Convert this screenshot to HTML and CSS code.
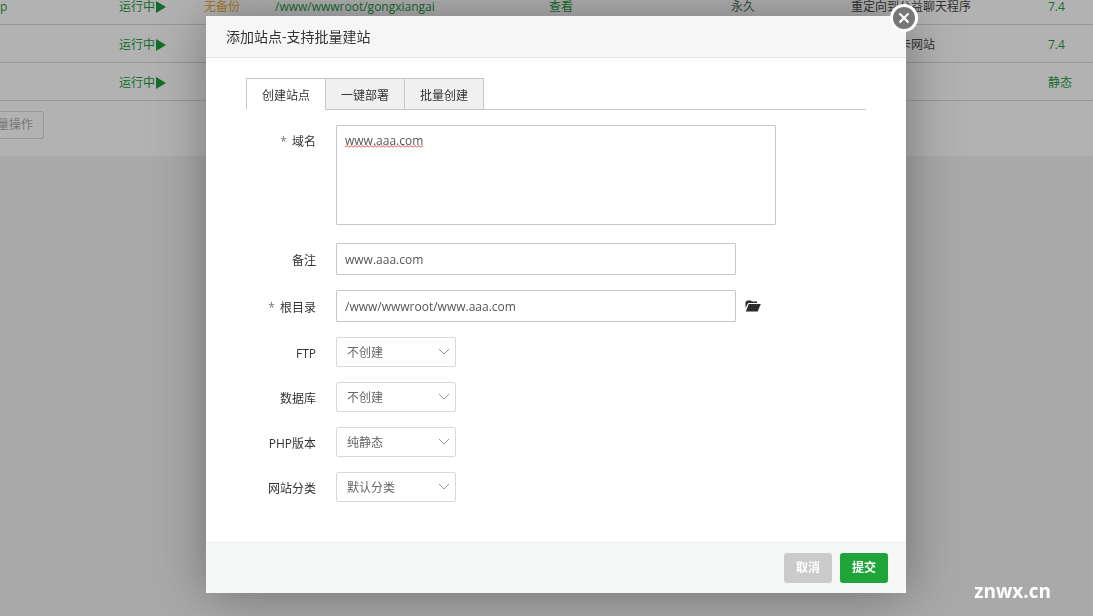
FILE: index.html
```html
<!DOCTYPE html>
<html lang="zh-CN">
<head>
<meta charset="utf-8">
<title>添加站点</title>
<link rel="stylesheet" href="styles.css">
</head>
<body>
<main class="panel">
  <table class="sites">
    <colgroup><col class="c-name"><col class="c-status"><col class="c-backup"><col class="c-path"><col class="c-view"><col class="c-expire"><col class="c-note"><col class="c-php"></colgroup>
    <tbody>
      <tr><td class="green">p</td><td class="green"><span class="status">运行中<i class="play"></i></span></td><td class="orange">无备份</td><td class="green">/www/wwwroot/gongxiangai</td><td class="green">查看</td><td class="muted">永久</td><td>重定向到公益聊天程序</td><td class="green">7.4</td></tr>
      <tr><td></td><td class="green"><span class="status">运行中<i class="play"></i></span></td><td></td><td></td><td></td><td></td><td><span class="indent">卡网站</span></td><td class="green">7.4</td></tr>
      <tr><td></td><td class="green"><span class="status">运行中<i class="play"></i></span></td><td></td><td></td><td></td><td></td><td></td><td class="green">静态</td></tr>
    </tbody>
  </table>
  <button class="batch" type="button">量操作</button>
</main>

<div class="overlay">
  <section class="dialog" role="dialog" aria-labelledby="dialog-title">
    <header class="dialog-head"><h1 id="dialog-title">添加站点-支持批量建站</h1></header>
    <button class="close" type="button" aria-label="关闭">
      <svg viewBox="0 0 30 30" width="30" height="30"><circle cx="15" cy="15" r="12.5" fill="#777" stroke="#fff" stroke-width="3"/><path d="M10.5 10.5l9 9M19.5 10.5l-9 9" stroke="#fff" stroke-width="2.2" fill="none"/></svg>
    </button>
    <form class="body" id="site-form">
      <nav class="tabs">
        <button class="tab active" type="button">创建站点</button>
        <button class="tab" type="button">一键部署</button>
        <button class="tab" type="button">批量创建</button>
      </nav>
      <div class="row row-domain">
        <label for="domain"><span class="star">*</span> 域名</label>
        <div class="domain">
          <textarea id="domain" spellcheck="false">www.aaa.com</textarea>
          <svg class="squiggle" viewBox="0 0 78 3" width="78" height="3" aria-hidden="true"><defs><pattern id="wave" width="4" height="3" patternUnits="userSpaceOnUse"><path d="M0 2.5L2 .5L4 2.5" fill="none" stroke="#e03c3c"/></pattern></defs><rect width="78" height="3" fill="url(#wave)"/></svg>
        </div>
      </div>
      <div class="row">
        <label for="note">备注</label>
        <input id="note" type="text" value="www.aaa.com">
      </div>
      <div class="row">
        <label for="root"><span class="star">*</span> 根目录</label>
        <input id="root" type="text" value="/www/wwwroot/www.aaa.com">
        <button class="folder" type="button" aria-label="选择目录">
          <svg viewBox="0 0 16 12" width="16" height="12" fill="#2b2b2b"><path d="M.5 8V1.5h1L2 .5h4l.7 1H12V3H3.2z"/><path d="M3.8 4H15.8L12.7 11.5H.8z"/></svg>
        </button>
      </div>
      <div class="row">
        <label for="ftp">FTP</label>
        <select id="ftp"><option>不创建</option></select>
      </div>
      <div class="row">
        <label for="db">数据库</label>
        <select id="db"><option>不创建</option></select>
      </div>
      <div class="row">
        <label for="php">PHP版本</label>
        <select id="php"><option>纯静态</option></select>
      </div>
      <div class="row">
        <label for="type">网站分类</label>
        <select id="type"><option>默认分类</option></select>
      </div>
    </form>
    <footer class="dialog-foot">
      <button class="btn cancel" type="button">取消</button>
      <button class="btn submit" type="submit" form="site-form">提交</button>
    </footer>
  </section>
</div>
<div class="watermark">znwx.cn</div>
</body>
</html>
```
FILE: styles.css
```css
* { box-sizing: border-box; }

body {
  margin: 0;
  min-height: 100vh;
  overflow: hidden;
  background: #a9a9a9;
  color: #333;
  font: 12px/18px "Open Sans", "Noto Sans CJK SC", sans-serif;
}

button, input, select, textarea { font: inherit; color: inherit; margin: 0; }

/* Site list, scrolled so its first row is partly out of view */
.panel {
  margin-top: -14px;
  padding-bottom: 17px;
  background: #b2b2b2;
}

.sites {
  width: 100%;
  table-layout: fixed;
  border-collapse: collapse;
}

.sites td {
  height: 38px;
  padding: 4px 0 0;
  border-bottom: 1px solid #989898;
  white-space: nowrap;
}

.c-name { width: 119px; }
.c-status { width: 85px; }
.c-backup { width: 71px; }
.c-path { width: 274px; }
.c-view { width: 182px; }
.c-expire { width: 120px; }
.c-note { width: 197px; }

.green { color: #146c2e; }
.orange { color: #a8762c; }
.muted { color: #35523f; }
.indent { padding-left: 48px; }

.status { display: flex; align-items: center; }

.play {
  border-left: 10px solid #146c2e;
  border-top: 6px solid transparent;
  border-bottom: 6px solid transparent;
  margin-left: 1px;
}

.batch {
  display: flex;
  align-items: center;
  justify-content: flex-end;
  width: 44px;
  height: 28px;
  margin-top: 10px;
  padding: 0 10px 0 0;
  border: 1px solid #999;
  border-left: 0;
  border-radius: 0 3px 3px 0;
  background: transparent;
  color: #777;
  white-space: nowrap;
}

/* Dialog */
.overlay {
  position: fixed;
  inset: 0;
  display: flex;
  justify-content: center;
  align-items: flex-start;
  padding: 16px 0 0 19px;
}

.dialog {
  position: relative;
  width: 700px;
  max-width: 100%;
  background: #fff;
  box-shadow: 1px 1px 50px rgba(0, 0, 0, .35);
}

.dialog-head {
  padding: 0 20px;
  background: #f6f6f6;
  border-bottom: 1px solid #e4e4e4;
}

.dialog-head h1 {
  margin: 0;
  font-size: 14px;
  font-weight: 400;
  line-height: 41px;
}

.close {
  position: absolute;
  top: -13px;
  right: -13px;
  padding: 0;
  border: 0;
  background: none;
}

.close svg, .folder svg { display: block; }

.body {
  display: flex;
  flex-direction: column;
  gap: 15px;
  padding: 20px 40px 40px;
}

.tabs {
  display: flex;
  border-bottom: 1px solid #c4c8c6;
}

.tab {
  width: 80px;
  height: 32px;
  margin: 0 0 -1px -1px;
  padding: 4px 0 0;
  border: 1px solid #c4c8c6;
  background: #f0f0f0;
}

.tab.active {
  margin-left: 0;
  border-bottom-color: #fff;
  background: #fff;
}

.row {
  display: flex;
  align-items: center;
}

.row label {
  width: 70px;
  margin-right: 20px;
  padding-top: 3px;
  text-align: right;
}

.star { color: #777; margin-right: 2px; }

.row-domain { align-items: flex-start; margin-bottom: 3px; }
.row-domain label { padding-top: 8px; }

.domain { position: relative; width: 440px; }

.domain textarea {
  display: block;
  width: 100%;
  height: 100px;
  padding: 6px 8px;
  resize: none;
}

.squiggle { position: absolute; left: 9px; top: 20px; }

.row input, .domain textarea {
  border: 1px solid #c4c8c6;
  border-radius: 1px;
  background: #fff;
  color: #555;
  outline: 0;
}

.row input {
  width: 400px;
  height: 32px;
  padding: 1px 8px 0;
}

.folder {
  margin-left: 9px;
  padding: 0;
  border: 0;
  background: none;
}

.row select {
  appearance: none;
  width: 120px;
  height: 30px;
  padding: 2px 24px 0 10px;
  border: 1px solid #d8dad9;
  border-radius: 2px;
  color: #666;
  background: #fff url("data:image/svg+xml,%3Csvg xmlns='http://www.w3.org/2000/svg' width='12' height='8'%3E%3Cpath d='M1 1l5 5 5-5' fill='none' stroke='%23999'/%3E%3C/svg%3E") no-repeat right 5px center;
}

.dialog-foot {
  display: flex;
  justify-content: flex-end;
  gap: 8px;
  padding: 10px 18px;
  border-top: 1px solid #edefee;
  background: #f6f8f7;
}

.btn {
  width: 48px;
  height: 30px;
  padding: 0;
  border: 0;
  border-radius: 3px;
  color: #fff;
  font-weight: 700;
}

.cancel { background: #cbcbcb; }
.submit { background: #20a53a; }

.watermark {
  position: fixed;
  right: 42px;
  bottom: 13px;
  color: #fff;
  font-size: 19px;
  font-weight: 700;
  line-height: 24px;
}
```
